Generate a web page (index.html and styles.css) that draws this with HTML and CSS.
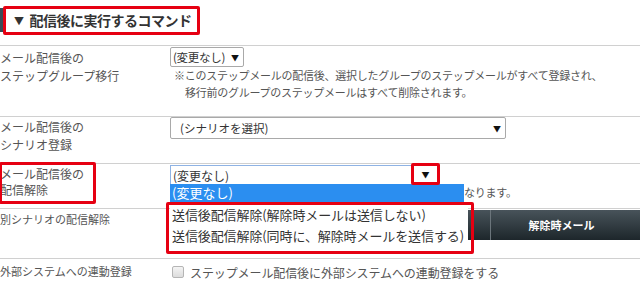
FILE: index.html
```html
<!DOCTYPE html>
<html lang="ja">
<head>
  <meta charset="UTF-8">
  <title>配信後に実行するコマンド</title>
  <link rel="stylesheet" href="styles.css">
</head>
<body>

<div class="page">
  <div class="head">
    <h2 class="head-title"><span class="head-icon">▼</span>配信後に実行するコマンド</h2>
  </div>

  <div class="row row-step">
    <div class="label">メール配信後の<br>ステップグループ移行</div>
    <div class="value">
      <div class="select select-small"><span>(変更なし)</span><i class="arrow">▼</i></div>
      <p class="note">※このステップメールの配信後、選択したグループのステップメールがすべて登録され、<br>移行前のグループのステップメールはすべて削除されます。</p>
    </div>
  </div>

  <div class="row row-scenario">
    <div class="label">メール配信後の<br>シナリオ登録</div>
    <div class="value">
      <div class="select select-wide"><span>(シナリオを選択)</span><i class="arrow">▼</i></div>
    </div>
  </div>

  <div class="row row-cancel">
    <div class="label">メール配信後の<br>配信解除</div>
    <div class="value">
      <div class="select select-focus"><span>(変更なし)</span></div>
      <!-- ドロップダウンに隠れていない部分 -->
      <p class="note note-tail">なります。</p>
    </div>
  </div>

  <div class="row row-other">
    <div class="label label-small">別シナリオの配信解除</div>
    <div class="value">
      <div class="grid-head">
        <div class="grid-col"></div>
        <div class="grid-col grid-col-mail">解除時メール</div>
      </div>
    </div>
  </div>

  <div class="row row-ext">
    <div class="label label-small">外部システムへの連動登録</div>
    <div class="value">
      <label class="check"><span class="check-box"></span>ステップメール配信後に外部システムへの連動登録をする</label>
    </div>
  </div>

  <!-- 開いているドロップダウン -->
  <ul class="dropdown">
    <li class="dropdown-active">(変更なし)</li>
    <li class="dropdown-options">
      <div>送信後配信解除(解除時メールは送信しない)</div>
      <div>送信後配信解除(同時に、解除時メールを送信する)</div>
    </li>
  </ul>

  <!-- 赤枠の注釈 -->
  <span class="mark mark-title"></span>
  <span class="mark mark-label"></span>
  <span class="mark mark-arrow"><i class="arrow">▼</i></span>
</div>

</body>
</html>
```

FILE: styles.css
```css
* {
  margin: 0;
  padding: 0;
  list-style: none;
  box-sizing: border-box;
}
body {
  font-family: "Noto Sans CJK JP", "Noto Sans", sans-serif;
  color: #555;
  background: #fff;
}
.page {
  position: relative;
  width: 640px;
  height: 288px;
  overflow: hidden;
}

/* 見出し */
.head {
  height: 45px;
  padding-top: 8px;
}
.head-title {
  height: 24px;
  line-height: 24px;
  border-left: 3px solid #3b4b57;
  padding-left: 11px;
  font-size: 14px;
  font-weight: bold;
  color: #333;
  letter-spacing: -0.5px;
}
.head-icon {
  font-size: 10px;
  margin-right: 6px;
  vertical-align: 1px;
}

/* 行 */
.row {
  display: grid;
  grid-template-columns: 170px 1fr;
  border-top: 1px solid #d0d0d0;
}
.label {
  font-size: 12px;
  line-height: 18px;
  padding-top: 3px;
  white-space: nowrap;
}
.label-small {
  font-size: 11px;
}
.row-step {
  height: 71px;
}
.row-step .select {
  margin-top: 1px;
}
.row-scenario {
  height: 47px;
}
.row-scenario .label {
  padding-top: 1px;
}
.row-cancel {
  height: 45px;
}
.row-cancel .label {
  padding-top: 2px;
  line-height: 16px;
}
.row-cancel .select {
  margin-top: 1px;
}
.row-other {
  height: 50px;
}
.row-other .label {
  padding-top: 1px;
}
.row-ext {
  height: 30px;
}
.row-ext .label {
  padding-top: 3px;
}

/* セレクト */
.select {
  position: relative;
  display: flex;
  align-items: center;
  background: #fff;
  border: 1px solid #a9a9a9;
  border-radius: 2px;
  font-size: 12px;
  color: #333;
  padding-left: 2px;
}
.select-small {
  width: 74px;
  height: 20px;
  font-size: 11.5px;
  letter-spacing: -0.3px;
}
.select-wide {
  width: 336px;
  height: 22px;
  padding-left: 9px;
  font-size: 11.5px;
}
.select-focus {
  width: 270px;
  height: 20px;
  border-color: #8fb3e4;
  border-radius: 0;
}
.arrow {
  font-style: normal;
  font-size: 8px;
  color: #111;
  letter-spacing: 0;
}
.select .arrow {
  position: absolute;
  top: 50%;
  right: 4px;
  transform: translateY(-50%);
}
.note {
  font-size: 11px;
  line-height: 17px;
  padding-left: 13px;
  text-indent: -11px;
  margin-left: 2px;
  white-space: nowrap;
  letter-spacing: -0.25px;
}
.note-tail {
  line-height: 14px;
  text-indent: 0;
  padding-left: 0;
  margin-left: 294px;
}

/* 表の見出し */
.grid-head {
  display: grid;
  grid-template-columns: 321px 1fr;
  height: 30px;
  margin-top: 1px;
  background: linear-gradient(#48535a, #1d262b);
}
.grid-col {
  border-right: 1px solid #6b757b;
}
.grid-col-mail {
  border-right: 0;
  color: #fff;
  font-size: 11px;
  font-weight: bold;
  line-height: 30px;
  text-align: center;
  padding-right: 8px;
}

/* チェックボックス */
.check {
  display: flex;
  align-items: center;
  gap: 6px;
  height: 24px;
  margin-top: 1px;
  font-size: 12px;
  padding-left: 2px;
  letter-spacing: -0.1px;
}
.check-box {
  width: 12px;
  height: 12px;
  border: 1px solid #b5b5b5;
  border-radius: 2px;
  background: linear-gradient(#f4f4f4, #dcdcdc);
}

/* ドロップダウン */
.dropdown {
  position: absolute;
  left: 170px;
  top: 184px;
  width: 294px;
  font-size: 13px;
}
.dropdown-active {
  height: 18px;
  line-height: 18px;
  background: #2b8ef0;
  color: #fff;
  padding-left: 2px;
}
.dropdown-options {
  background: #fff;
  color: #333;
  padding-top: 2px;
  height: 46px;
  line-height: 21px;
  padding-left: 2px;
  white-space: nowrap;
  width: 298px;
  letter-spacing: -0.1px;
}
.dropdown::after {
  content: "";
  position: absolute;
  left: -4px;
  top: 18px;
  width: 302px;
  height: 46px;
  border: 3px solid #e60012;
  border-radius: 2px;
}

/* 赤枠 */
.mark {
  position: absolute;
  border: 3px solid #e60012;
  border-radius: 2px;
}
.mark-title {
  left: 3px;
  top: 6px;
  width: 197px;
  height: 29px;
}
.mark-label {
  left: -1px;
  top: 162px;
  width: 97px;
  height: 42px;
}
.mark-arrow {
  left: 411px;
  top: 163px;
  width: 29px;
  height: 22px;
  background: #fff;
  display: flex;
  align-items: center;
  justify-content: center;
}
```
